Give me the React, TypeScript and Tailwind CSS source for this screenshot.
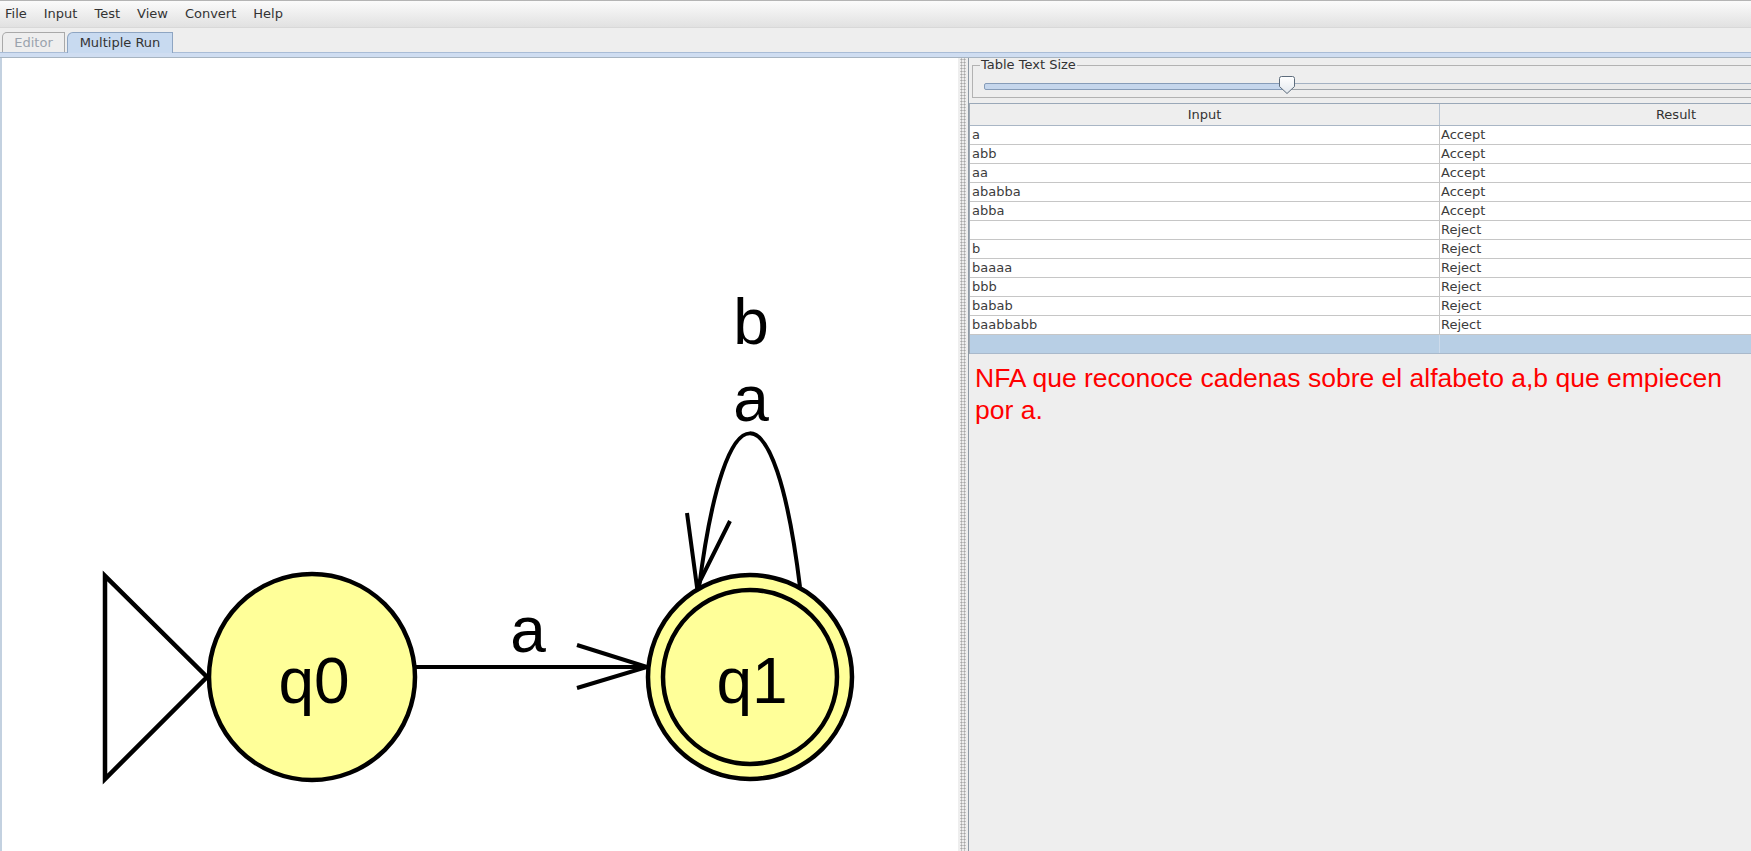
import React from "react";

const rows: [string, string][] = [
  ["a", "Accept"],
  ["abb", "Accept"],
  ["aa", "Accept"],
  ["ababba", "Accept"],
  ["abba", "Accept"],
  ["", "Reject"],
  ["b", "Reject"],
  ["baaaa", "Reject"],
  ["bbb", "Reject"],
  ["babab", "Reject"],
  ["baabbabb", "Reject"],
];

function Diagram() {
  const lbl = { fontFamily: "'Liberation Sans', Arial, sans-serif" };
  return (
    <svg width={956} height={793} viewBox="2 58 956 793" className="block">
      <polygon points="105,576 105,779 207,677" fill="#ffffff" stroke="#000" strokeWidth={4.5} strokeLinejoin="miter" />
      <circle cx={312} cy={677} r={103} fill="#ffff99" stroke="#000" strokeWidth={4.5} />
      <text x={314} y={703} textAnchor="middle" fontSize={64} fill="#000" style={lbl}>q0</text>
      <line x1={415} y1={667} x2={648} y2={667} stroke="#000" strokeWidth={4} />
      <polyline points="577,645 647,667 577,688" fill="none" stroke="#000" strokeWidth={4} />
      <text x={528} y={652} textAnchor="middle" fontSize={64} fill="#000" style={lbl}>a</text>
      <path d="M 800 587 C 775 382, 725 382, 699 588" fill="none" stroke="#000" strokeWidth={4} />
      <polyline points="687,513 697,587 730,521" fill="none" stroke="#000" strokeWidth={4} />
      <text x={751} y={344} textAnchor="middle" fontSize={64} fill="#000" style={lbl}>b</text>
      <text x={751} y={421} textAnchor="middle" fontSize={64} fill="#000" style={lbl}>a</text>
      <circle cx={750} cy={677} r={102} fill="#ffff99" stroke="#000" strokeWidth={4.5} />
      <circle cx={750} cy={677} r={87} fill="none" stroke="#000" strokeWidth={4.5} />
      <text x={752} y={703} textAnchor="middle" fontSize={64} fill="#000" style={lbl}>q1</text>
    </svg>
  );
}

function Thumb() {
  return (
    <svg width={18} height={20} viewBox="0 0 18 20">
      <defs>
        <linearGradient id="tg" x1="0" y1="0" x2="0" y2="1">
          <stop offset="0" stopColor="#ffffff" />
          <stop offset="1" stopColor="#e3e8ee" />
        </linearGradient>
      </defs>
      <path d="M1.5 3.5 Q1.5 1.5 3.5 1.5 H14.5 Q16.5 1.5 16.5 3.5 V11.5 L9 18.5 L1.5 11.5 Z" fill="url(#tg)" stroke="#5d6c7c" strokeWidth={1} />
    </svg>
  );
}

export default function App() {
  return (
    <div className="w-[1751px] h-[851px] overflow-hidden flex flex-col bg-[#eeeeee] font-['DejaVu_Sans',sans-serif] text-[13px] text-[#333333]">
      {/* menu bar */}
      <div className="h-[27px] shrink-0 border-t border-[#b4b4b4] bg-gradient-to-b from-[#fbfbfb] to-[#e1e1e1] flex items-center pl-[5px] gap-[17px] leading-[16px]">
        {["File", "Input", "Test", "View", "Convert", "Help"].map((m) => (
          <span key={m}>{m}</span>
        ))}
      </div>
      {/* tab strip */}
      <div className="h-[25px] shrink-0 flex items-end pl-[2px] gap-[2px] border-t border-[#d8d8d8]">
        <div className="h-[20px] w-[63px] border border-b-0 border-[#a9a9a9] rounded-tl-[5px] bg-[#eeeeee] flex items-center justify-center text-[#9aa3ad] leading-[16px]">
          Editor
        </div>
        <div className="h-[21px] w-[106px] border border-b-0 border-[#8ea5c2] rounded-tl-[6px] bg-[#c8daf0] flex items-center justify-center text-[#333333] leading-[16px] relative top-[1px]">
          Multiple Run
        </div>
      </div>
      <div className="h-[6px] shrink-0 border-t border-[#a9bcd6] bg-[#cfddf1] border-b border-b-[#a7b4c1]" />
      {/* body */}
      <div className="flex-1 flex min-h-0">
        <div className="w-[958px] shrink-0 bg-white border-l-2 border-[#c3d1e0] overflow-hidden">
          <Diagram />
        </div>
        <div className="w-[10px] shrink-0 flex justify-center">
          <div className="w-[6px] h-full bg-[radial-gradient(circle,#a6a6a6_0.8px,transparent_1.3px)] bg-[length:3px_3px]" />
        </div>
        <div className="flex-1 min-w-0 border-l border-[#8e99a4] overflow-hidden">
          <div className="w-[960px]">
            {/* titled border with slider */}
            <div className="pt-[7px] pl-[3px]">
              <div className="relative h-[33px] border border-[#b2b2b2] pl-[11px] pt-[17px]">
                <span className="absolute left-[7px] top-[-10px] leading-[18px] bg-[#eeeeee] px-[1px] text-[#333333]">
                  Table Text Size
                </span>
                <div className="flex h-[7px]">
                  <div className="w-[303px] h-[7px] border border-[#869cb8] rounded-l-[2px] bg-[#c5d6ec]" />
                  <div className="flex-1 h-[7px] border-y border-t-[#a3b1c2] border-b-[#9ea4aa] bg-[#e9e9e9]" />
                </div>
                <div className="absolute left-[305px] top-[9px]">
                  <Thumb />
                </div>
              </div>
            </div>
            {/* table */}
            <div className="mt-[5px] border-t border-[#9aa8b8] border-l border-l-[#a2abb4] bg-white">
              <div className="flex h-[22px] bg-[#eeeeee] border-b border-[#a9b6c5] leading-[16px] text-[#333333]">
                <div className="w-[470px] border-r border-[#b8c4d2] flex items-center justify-center">Input</div>
                <div className="w-[472px] flex items-center justify-center">Result</div>
              </div>
              {rows.map(([i, r], k) => (
                <div key={k} className="flex h-[19px] border-b border-[#c6c6c6] leading-[18px] text-[#3c3c3c]">
                  <div className="w-[470px] border-r border-[#c6c6c6] pl-[2px] overflow-hidden whitespace-pre">{i}</div>
                  <div className="w-[472px] pl-[1px]">{r}</div>
                </div>
              ))}
              <div className="flex h-[19px] border-b border-[#a9b9cb] bg-[#b8cfe5]">
                <div className="w-[470px] border-r border-[#cddbeb]" />
                <div className="w-[472px]" />
              </div>
            </div>
            {/* description */}
            <div className="pt-[8px] pl-[6px] w-[782px] font-['Liberation_Sans',Arial,sans-serif] text-[26.5px] leading-[32px] text-[#ff0000]">
              NFA que reconoce cadenas sobre el alfabeto a,b que empiecen por a.
            </div>
          </div>
        </div>
      </div>
    </div>
  );
}
